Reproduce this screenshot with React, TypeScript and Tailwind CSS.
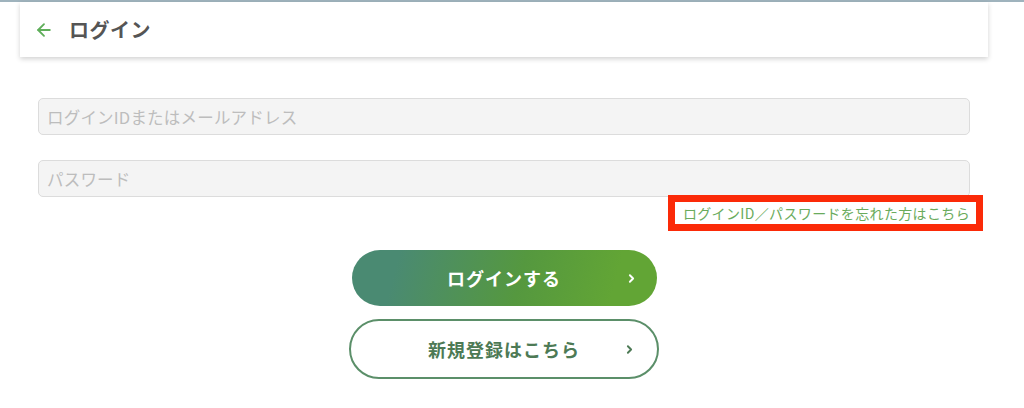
import React from 'react';
import { ArrowLeft, ChevronRight } from 'lucide-react';

const font = { fontFamily: '"Noto Sans CJK JP", "Noto Sans", sans-serif' };

const App: React.FC = () => {
    return (
        <div className="w-[1024px] h-[408px] bg-white overflow-hidden" style={font}>
            <div className="h-[2px] bg-[#9fb3bd]" />
            <div className="w-[1008px]">
                {/* ヘッダー */}
                <div className="mx-5 h-[55px] bg-white flex items-center pl-[14px] gap-[15px] shadow-[0_2px_5px_rgba(0,0,0,0.18)]">
                    <ArrowLeft className="w-[20px] h-[20px] text-[#5fae5a]" strokeWidth={2.2} />
                    <h1 className="text-[20px] font-bold text-[#555] tracking-[0.5px]">ログイン</h1>
                </div>

                {/* フォーム */}
                <div className="px-[38px] pt-[41px]">
                    <input
                        className="w-full h-[37px] rounded-[5px] border border-[#dcdcdc] bg-[#f4f4f4] px-2 text-[16.5px] tracking-[0.2px] placeholder:text-[#bdbdbd] outline-none"
                        placeholder="ログインIDまたはメールアドレス"
                    />
                    <input
                        type="password"
                        className="mt-[25px] w-full h-[37px] rounded-[5px] border border-[#dcdcdc] bg-[#f4f4f4] px-2 text-[16.5px] tracking-[0.2px] placeholder:text-[#bdbdbd] outline-none"
                        placeholder="パスワード"
                    />
                    <div className="flex justify-end -mr-[13px] mt-[-2px]">
                        <a className="border-[7px] border-[#fb2a08] h-[36px] flex items-center pl-[8px] pr-[6px] text-[14px] tracking-[0.35px] text-[#6aab5c]">
                            ログインID／パスワードを忘れた方はこちら
                        </a>
                    </div>
                </div>

                {/* ボタン */}
                <div className="flex flex-col items-center pt-[19px] gap-[13px]">
                    <button className="relative w-[305px] h-[56px] rounded-full bg-[linear-gradient(105deg,#4a8a72_15%,#55983f_55%,#62a535_85%)] text-white text-[18px] font-bold tracking-[1px] flex items-center justify-center">
                        ログインする
                        <ChevronRight className="absolute right-[19px] w-[13px] h-[13px]" strokeWidth={3.5} />
                    </button>
                    <button className="relative w-[310px] h-[60px] rounded-full bg-white border-2 border-[#5b8f69] text-[#4d7a55] text-[18px] font-bold tracking-[1px] flex items-center justify-center">
                        新規登録はこちら
                        <ChevronRight className="absolute right-[21px] w-[13px] h-[13px]" strokeWidth={3.5} />
                    </button>
                </div>
            </div>
        </div>
    );
};

export default App;
